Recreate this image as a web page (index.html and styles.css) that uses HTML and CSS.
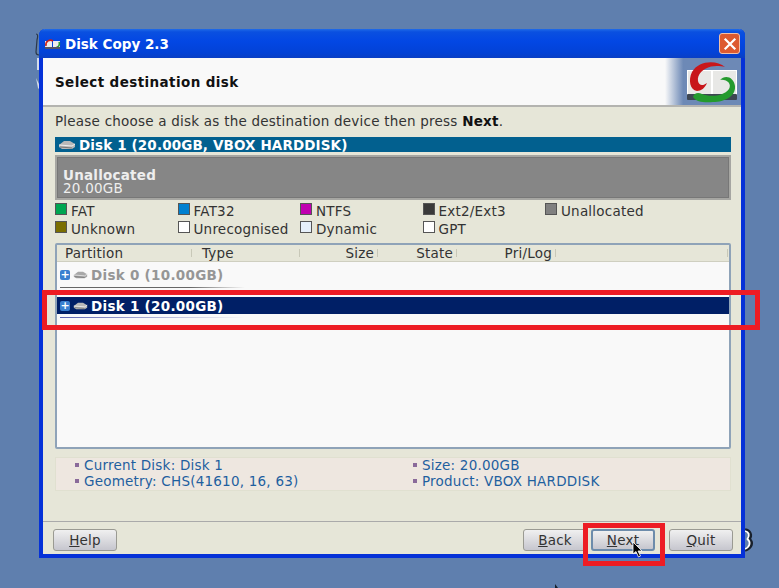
FILE: index.html
```html
<!DOCTYPE html>
<html>
<head>
<meta charset="utf-8">
<title>Disk Copy 2.3</title>
<link rel="stylesheet" href="styles.css">
</head>
<body>
<div class="desktop">
  <svg class="peek" width="779" height="588" viewBox="0 0 779 588">
    <path d="M36 34 C38 34 38 36 37 40 L36 52 C36 54 37 55 39 55" fill="none" stroke="#2c3848" stroke-width="1.2"/>
    <path d="M37 58 H40 V70 H37Z M36 78 L40 86 V90 L38 88Z" fill="#d4dcea"/>
    <path d="M745 530 C750 531 752 535 749 539 C753 542 752 548 745 550" fill="none" stroke="#18202c" stroke-width="3.4"/>
    <path d="M745 531 C749 532 750 535 747.5 539 C751 542 750 547 745 549" fill="none" stroke="#fff" stroke-width="1.8"/>
    <path d="M555 584 L558 588 H555Z" fill="#18202c"/>
  </svg>
  <div class="window">
    <div class="titlebar">
      <svg class="app-icon" width="17" height="12" viewBox="0 0 17 12"><rect x="1" y="3" width="7" height="7" fill="#eee"/><rect x="9" y="3" width="7" height="7" fill="#eee"/><path d="M2 8 C1 3 6 1 9 3" fill="none" stroke="#c8201c" stroke-width="1.6"/><path d="M15 4 C17 9 11 11 7 10" fill="none" stroke="#2a9a34" stroke-width="1.6"/><rect x="1" y="9" width="15" height="2" fill="#556"/></svg>
      <span class="title-text">Disk Copy 2.3</span>
      <span class="close"><svg width="14" height="14" viewBox="0 0 14 14"><path d="M2.5 2.5 L11.5 11.5 M11.5 2.5 L2.5 11.5" stroke="#fff" stroke-width="2.2" stroke-linecap="square"/></svg></span>
    </div>
    <div class="header">
      <span class="header-title">Select destination disk</span>
      <div class="logo-fade">
        <svg class="logo" width="52" height="46" viewBox="0 0 52 46">
          <rect x="0.5" y="10.5" width="24" height="25" fill="#e8e8e6" stroke="#fff"/>
          <rect x="25.5" y="10.5" width="24" height="25" fill="#e8e8e6" stroke="#fff"/>
          <rect x="0" y="34" width="50" height="6" rx="1" fill="#3d4652"/>
          <path d="M38 7 C30 0 12 0 5 12 C1 20 3 30 10 31 C14 31 18 28 20 23 C16 26 12 26 11 21 C10 14 16 9 24 6.5 C29 5.5 34 6 38 7Z" fill="#c8161a"/>
          <path d="M33 20 C38 14 47 17 48 26 C49 36 38 42 26 42 C18 43 9 42 6 37 C7 33 11 32 15 34 C22 37 36 37 42 29 C45 24 40 19 33 20Z" fill="#249a2e"/>
        </svg>
      </div>
    </div>
    <div class="body">
      <p class="prompt">Please choose a disk as the destination device then press <b>Next</b>.</p>
      <div class="disk-bar">
        <svg class="disk-icon" width="18" height="10" viewBox="0 0 18 10"><path d="M1 5 L6 1 H12 L17 4 V7 L14 9 H4 L1 7Z" fill="#b8b8b8"/><path d="M1 5 L14 6 L17 4" fill="none" stroke="#eee"/><path d="M2 7 L14 8" stroke="#777"/></svg>
        <span>Disk 1 (20.00GB, VBOX HARDDISK)</span>
      </div>
      <div class="partition-map">
        <b>Unallocated</b>
        <span>20.00GB</span>
      </div>
      <div class="legend">
        <div class="legend-item"><i class="swatch c-fat"></i>FAT</div>
        <div class="legend-item"><i class="swatch c-fat32"></i>FAT32</div>
        <div class="legend-item"><i class="swatch c-ntfs"></i>NTFS</div>
        <div class="legend-item"><i class="swatch c-ext"></i>Ext2/Ext3</div>
        <div class="legend-item"><i class="swatch c-unalloc"></i>Unallocated</div>
        <div class="legend-item"><i class="swatch c-unknown"></i>Unknown</div>
        <div class="legend-item"><i class="swatch c-white"></i>Unrecognised</div>
        <div class="legend-item"><i class="swatch c-dynamic"></i>Dynamic</div>
        <div class="legend-item"><i class="swatch c-white"></i>GPT</div>
      </div>
      <div class="tree">
        <div class="tree-head">
          <span class="col col-partition">Partition</span>
          <span class="col col-type">Type</span>
          <span class="col col-size">Size</span>
          <span class="col col-state">State</span>
          <span class="col col-pri">Pri/Log</span>
          <span class="col col-rest"></span>
        </div>
        <div class="tree-row muted">
          <div class="row-main">
            <span class="expander">+</span>
            <svg class="disk-icon" width="15" height="10" viewBox="0 0 18 10"><path d="M1 5 L6 1 H12 L17 4 V7 L14 9 H4 L1 7Z" fill="#a8a8a8"/><path d="M1 5 L14 6 L17 4" fill="none" stroke="#e4e4e4"/><path d="M2 7 L14 8" stroke="#777"/></svg>
            <span>Disk 0 (10.00GB)</span>
          </div>
          <div class="row-rule"></div>
        </div>
        <div class="tree-row selected">
          <div class="row-main">
            <span class="expander">+</span>
            <svg class="disk-icon" width="15" height="10" viewBox="0 0 18 10"><path d="M1 5 L6 1 H12 L17 4 V7 L14 9 H4 L1 7Z" fill="#b8b8b8"/><path d="M1 5 L14 6 L17 4" fill="none" stroke="#eee"/><path d="M2 7 L14 8" stroke="#777"/></svg>
            <span>Disk 1 (20.00GB)</span>
          </div>
          <div class="row-rule"></div>
        </div>
      </div>
      <div class="info">
        <div class="info-item"><i></i>Current Disk: Disk 1</div>
        <div class="info-item"><i></i>Size: 20.00GB</div>
        <div class="info-item"><i></i>Geometry: CHS(41610, 16, 63)</div>
        <div class="info-item"><i></i>Product: VBOX HARDDISK</div>
      </div>
    </div>
    <div class="footer">
      <button class="btn"><u>H</u>elp</button>
      <span class="spacer"></span>
      <button class="btn"><u>B</u>ack</button>
      <button class="btn focus"><u>N</u>ext</button>
      <button class="btn"><u>Q</u>uit</button>
    </div>
  </div>
  <div class="mark mark-row"></div>
  <div class="mark mark-next"></div>
  <svg class="cursor" width="11" height="17" viewBox="0 0 11 17"><path d="M1 1 V13 L4 10.5 L6.5 16 L8.5 15 L6 10 H10Z" fill="#000" stroke="#fff" stroke-width="0.8"/></svg>
</div>
</body>
</html>
```
FILE: styles.css
```css
* { box-sizing: border-box; }
html, body { margin: 0; height: 100%; overflow: hidden; }
body { background: #5f7fae; font-family: "DejaVu Sans", sans-serif; font-size: 13.5px; letter-spacing: 0.22px; color: #333; }
.desktop { position: relative; width: 779px; height: 588px; }
.peek { position: absolute; left: 0; top: 0; }
.window {
  position: absolute; left: 39px; top: 29px; width: 706px; height: 529px;
  display: flex; flex-direction: column;
  background: #e6e6d8;
  border: 4px solid #0531d8; border-top: 0; border-radius: 6px 6px 0 0;
}
.titlebar {
  height: 29px; flex: none; margin: 0 -4px; padding: 0 5px;
  display: flex; align-items: center; gap: 4px;
  background: linear-gradient(#1f6ae8 0, #0a50e0 3px, #0347e4 12px, #0342d6 24px, #0a3fc4 100%);
  border-radius: 6px 6px 0 0;
  color: #fff; font-weight: bold; letter-spacing: 0;
}
.close {
  margin-left: auto; width: 21px; height: 21px;
  display: flex; align-items: center; justify-content: center;
  background: #dd5a30; border: 1px solid #f0c0a8; border-radius: 3px;
}
.header {
  height: 49px; flex: none; display: flex; align-items: flex-start; justify-content: space-between;
  background: #f9f9f9; border-bottom: 2px solid #b4b4b0; padding-left: 12px;
}
.header-title { font-weight: bold; color: #111; letter-spacing: 0.4px; line-height: 49px; }
.logo-fade {
  width: 76px; height: 47px; padding: 2px 2px 0 0; display: flex; justify-content: flex-end;
  background: linear-gradient(90deg, #f9f9f9, #6d89b6 24%);
}
.body { flex: 1; min-height: 0; padding: 4px 10px 0 12px; display: flex; flex-direction: column; }
.prompt { margin: 0; height: 20px; line-height: 20px; }
.prompt b { color: #111; }
.disk-bar {
  margin-top: 6px; height: 15px; flex: none; background: #02608f; color: #fff; font-weight: bold;
  display: flex; align-items: center; gap: 3px; padding-left: 3px; letter-spacing: 0.13px;
}
.partition-map {
  margin-top: 3px; height: 45px; flex: none; background: #868686; color: #eee;
  border: 2px solid #a6a6a2; outline: 1px solid #777; outline-offset: -3px;
  display: flex; flex-direction: column; justify-content: center; padding: 8px 0 0 6px; line-height: 13px;
}
.legend {
  margin-top: 2px; flex: none; display: grid; grid-template-columns: repeat(5, 122.5px); grid-auto-rows: 18px;
}
.legend-item { display: flex; align-items: center; gap: 4px; }
.swatch { width: 12px; height: 12px; border: 1px solid #555; margin-top: -4px; flex: none; }
.c-fat { background: #00a651; }
.c-fat32 { background: #0080d0; }
.c-ntfs { background: #c000b0; }
.c-ext { background: #3a3a3a; }
.c-unalloc { background: #808080; }
.c-unknown { background: #7a6e00; }
.c-white { background: #fff; }
.c-dynamic { background: #e6f0fa; }
.tree {
  margin-top: 5px; height: 206px; flex: none; background: #f9f9f9;
  border: 2px solid #8fa3b8; border-radius: 2px;
}
.tree-head { height: 17px; background: #e6e6d8; border-bottom: 1px solid #cfcfc0; display: flex; }
.col {
  flex: none; height: 16px; line-height: 16px; padding-right: 4px; text-align: right;
  background: linear-gradient(#c8c8b8, #c8c8b8) right center / 1px 8px no-repeat;
}
.col-partition { width: 135px; padding-left: 8px; text-align: left; }
.col-type { width: 108px; padding-left: 10px; text-align: left; }
.col-size { width: 78px; }
.col-state { width: 79px; }
.col-pri { width: 99px; }
.col-rest { width: 172px; }
.tree-row { height: 30px; margin-top: 4px; }
.row-main { height: 17px; display: flex; align-items: center; font-weight: bold; padding-left: 3px; gap: 3px; letter-spacing: 0.28px; }
.muted .row-main { color: #969696; }
.selected { margin-top: 1px; }
.selected .row-main { background: #001f66; color: #fff; }
.row-rule { height: 1px; margin: 4px 0 0 3px; width: 185px; background: linear-gradient(90deg, #666, #666 70%, transparent); }
.selected .row-rule { margin-top: 3px; background: linear-gradient(90deg, #5a62b0, transparent); }
.expander {
  width: 10px; height: 10px; background: #3a80d0; color: #fff; border-radius: 2px;
  font-size: 11px; line-height: 10px; text-align: center; font-weight: bold; letter-spacing: 0;
}
.info {
  margin-top: 8px; height: 34px; flex: none; background: #eee7e0; border: 1px solid #e0e0d0;
  display: grid; grid-template-columns: 338px 1fr; grid-auto-rows: 16px; align-content: center;
  color: #1f5f9f; padding: 0 0 2px 19px;
}
.info-item { display: flex; align-items: center; gap: 5px; line-height: 16px; }
.info-item i { width: 4px; height: 4px; background: #8a6a9a; flex: none; }
.footer {
  height: 33px; flex: none; margin-top: auto; border-top: 1px solid #aaa; padding: 7px 8px 0 10px;
  display: flex; align-items: flex-start;
}
.spacer { flex: 1; }
.btn {
  width: 64px; height: 22px; padding: 0; font: inherit; letter-spacing: inherit; color: #333;
  background: linear-gradient(#f0f0f0, #c6c6ce); border: 1px solid #9a9a92; border-radius: 3px;
}
.focus { border: 2px solid #6d8cab; margin: 0 14px 0 4px; }
.mark { position: absolute; border: 5px solid #ed1c24; }
.mark-row { left: 42px; top: 290px; width: 718px; height: 40px; }
.mark-next { left: 583px; top: 523px; width: 82px; height: 43px; }
.cursor { position: absolute; left: 632px; top: 541px; }
```
